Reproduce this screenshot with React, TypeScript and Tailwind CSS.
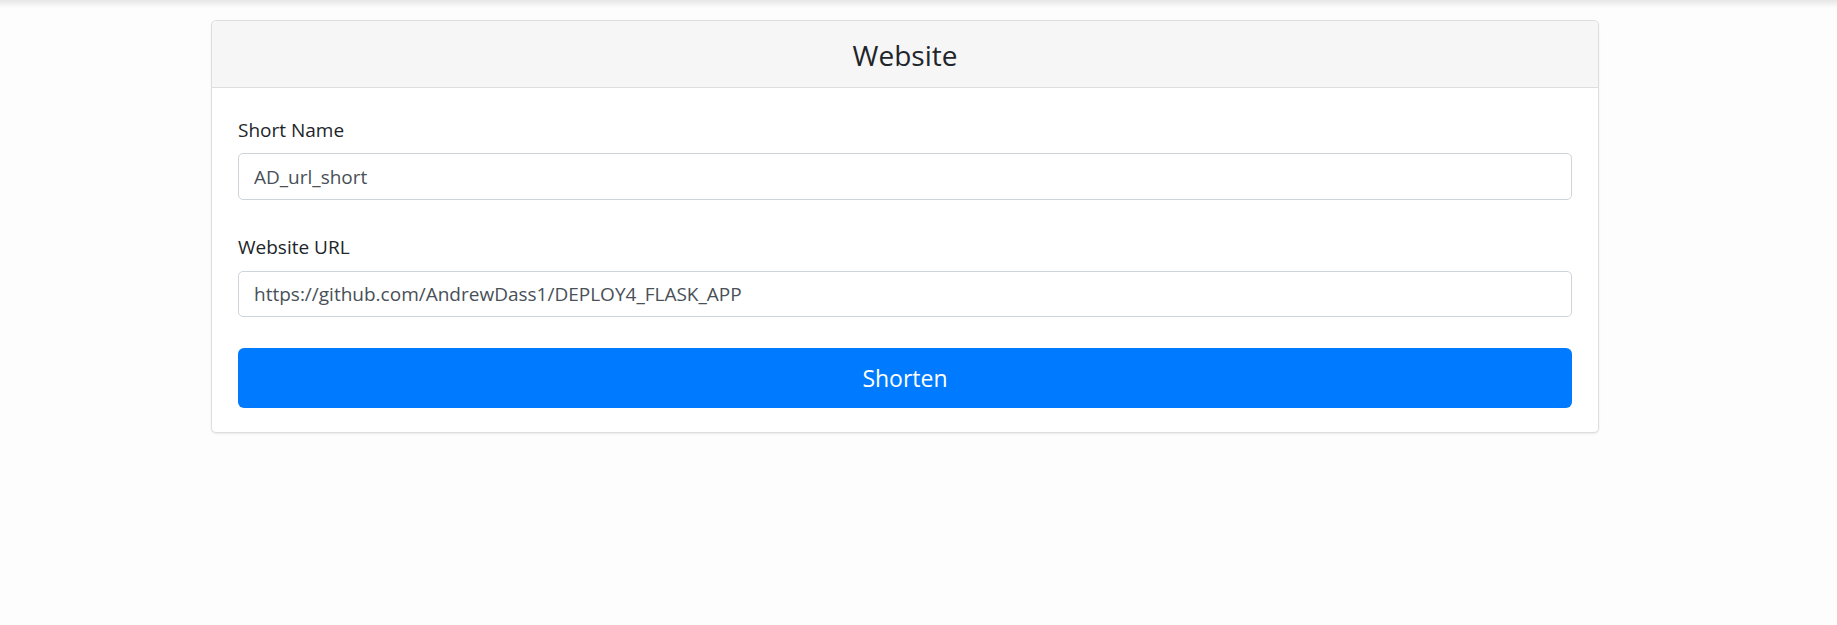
import React, { useState } from 'react';

const App: React.FC = () => {
  const [shortName, setShortName] = useState('AD_url_short');
  const [url, setUrl] = useState('https://github.com/AndrewDass1/DEPLOY4_FLASK_APP');

  return (
    <div className="min-h-[625px] w-full bg-[#fdfdfd] font-['Open_Sans',sans-serif]">
      <div className="h-[8px] w-full bg-gradient-to-b from-[#e6e6e6] to-[#fdfdfd]" />
      <div className="pt-[12px] pl-[211px]">
        <div className="w-[1388px] rounded-[5px] border border-[#dedede] bg-white shadow-[0_1px_2px_rgba(0,0,0,0.08)]">
          <div className="flex h-[67px] items-center justify-center rounded-t-[5px] border-b border-[#dedede] bg-[#f6f6f6]">
            <h3 className="pt-[1px] text-[28px] font-normal leading-none text-[#212529]">Website</h3>
          </div>
          <form className="flex flex-col px-[26px] pt-[28px] pb-[24px]" onSubmit={(e) => e.preventDefault()}>
            <label className="mb-[9px] block h-[28px] text-[19px] leading-[28px] text-[#212529]">Short Name</label>
            <input
              value={shortName}
              onChange={(e) => setShortName(e.target.value)}
              className="h-[47px] w-full rounded-[5px] border border-[#ced4da] px-[15px] text-[19px] text-[#495057] outline-none"
            />
            <label className="mt-[33px] mb-[10px] block h-[28px] text-[19px] leading-[28px] text-[#212529]">Website URL</label>
            <input
              value={url}
              onChange={(e) => setUrl(e.target.value)}
              className="h-[46px] w-full rounded-[5px] border border-[#ced4da] px-[15px] text-[19px] text-[#495057] outline-none"
            />
            <button
              type="submit"
              className="mt-[31px] h-[60px] w-full rounded-[6px] bg-[#007bff] text-[23px] text-white"
            >
              Shorten
            </button>
          </form>
        </div>
      </div>
    </div>
  );
};

export default App;
